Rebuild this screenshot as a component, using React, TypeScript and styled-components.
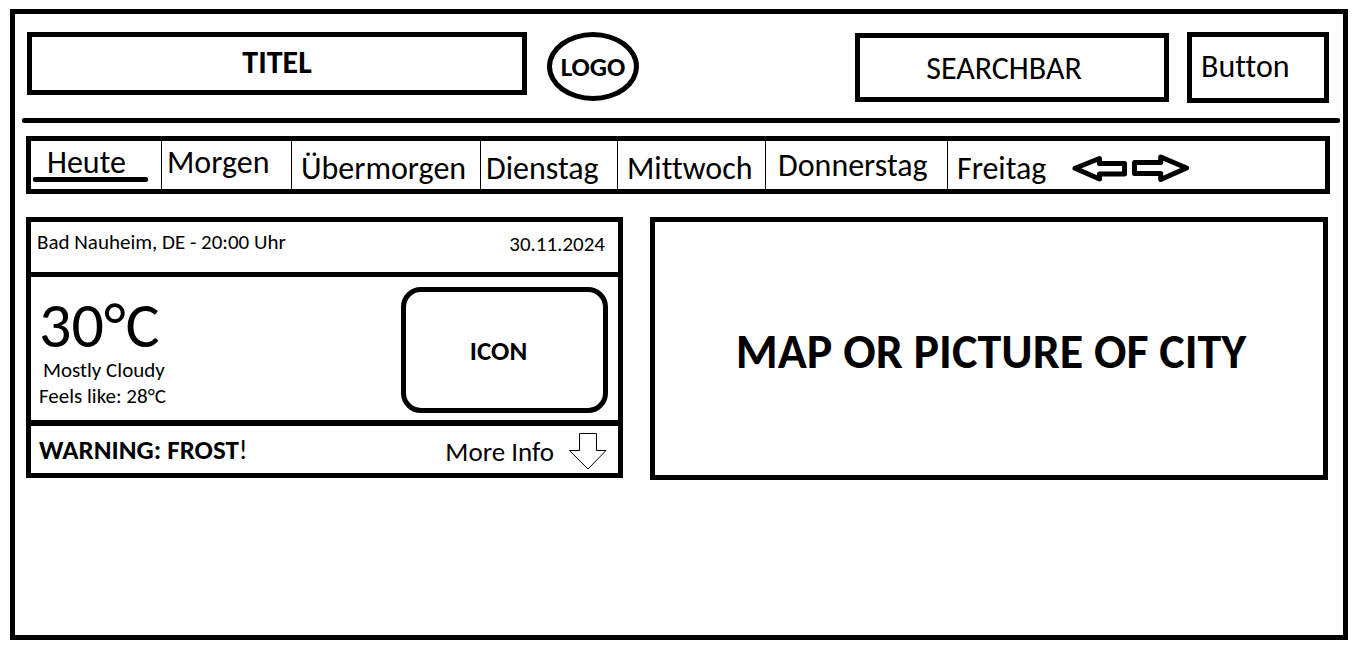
import React, { useState } from "react";
import styled, { createGlobalStyle, css } from "styled-components";

const GlobalStyle = createGlobalStyle`
  *, *::before, *::after { box-sizing: border-box; }
  body {
    margin: 0;
    background: #fff;
    color: #000;
    font-family: Carlito, Lato, "Liberation Sans", sans-serif;
    font-variant-ligatures: none;
  }
  h1, h2, p { margin: 0; font-weight: inherit; font-size: inherit; }
  button, input { font: inherit; font-variant-ligatures: none; color: inherit; border-radius: 0; margin: 0; }
  button { background: none; border: 0; padding: 0; text-align: left; cursor: pointer; }
`;

const line = "5px solid #000";

const Frame = styled.div`
  display: flex;
  flex-direction: column;
  min-height: calc(100vh - 22px);
  margin: 9px 6px 13px 10px;
  padding-top: 18px;
  border: ${line};
`;

const Header = styled.header`
  display: flex;
  align-items: center;
  padding: 0 14px 0 12px;
`;

const Title = styled.h1`
  flex: 0 1 500px;
  align-self: flex-start;
  height: 63px;
  border: ${line};
  text-align: center;
  font-size: 32px;
  font-weight: 700;
  line-height: 52px;
`;

const Logo = styled.div`
  display: flex;
  align-items: center;
  justify-content: center;
  flex: none;
  align-self: flex-start;
  width: 92px;
  height: 69px;
  margin: 0 20px;
  border: ${line};
  border-radius: 50%;
  font-size: 27px;
  font-weight: 700;
`;

const Search = styled.form`
  flex: 0 1 314px;
  min-width: 0;
  margin-left: auto;
`;

const SearchInput = styled.input`
  display: block;
  width: 100%;
  height: 69px;
  padding: 2px 20px 0 4px;
  border: ${line};
  background: #fff;
  text-align: center;
  font-size: 32px;
  &::placeholder { color: #000; opacity: 1; }
`;

const HeaderButton = styled.button`
  flex: none;
  width: 142px;
  height: 71px;
  margin-left: 18px;
  padding: 0 0 2px 9px;
  border: ${line};
  font-size: 32px;
`;

const Divider = styled.hr`
  width: auto;
  height: 5px;
  margin: 15px 3px 0 7px;
  border: 0;
  border-radius: 2px;
  background: #000;
`;

const DayBar = styled.nav`
  display: flex;
  height: 58px;
  margin: 13px 13px 0 11px;
  border: ${line};
  font-size: 32px;
`;

type Level = "high" | "middle" | "low";
const levels: Record<Level, string> = { high: "8px", middle: "11px", low: "14px" };

const DayButton = styled.button<{ $width: number; $inset: number; $level: Level; $active: boolean }>`
  display: flex;
  flex-direction: column;
  flex: 0 0 ${(p) => p.$width}px;
  padding-top: ${(p) => levels[p.$level]};
  line-height: 28px;
  span { padding-left: ${(p) => p.$inset}px; }
  & + & { border-left: 1px solid #000; }
  ${(p) =>
    p.$active &&
    css`
      &::after {
        content: "";
        width: 115px;
        height: 5px;
        margin-left: 2px;
        border-radius: 2px;
        background: #000;
      }
    `}
`;

const Arrows = styled.div`
  display: flex;
  align-items: center;
  gap: 4px;
  margin-left: 24px;
  padding-top: 6px;
`;

const ArrowButton = styled.button`
  svg { display: block; }
`;

const Content = styled.main`
  display: grid;
  grid-template-columns: 597fr 678fr;
  align-items: start;
  gap: 27px;
  margin: 23px 15px 0 11px;
`;

const Card = styled.section`
  border: ${line};
`;

const CardHeader = styled.div`
  display: flex;
  justify-content: space-between;
  align-items: flex-start;
  height: 55px;
  padding: 7px 13px 0 6px;
  border-bottom: ${line};
  font-size: 21px;
  line-height: 26px;
`;

const DateText = styled.time`
  padding-top: 2px;
`;

const CardBody = styled.div`
  display: flex;
  justify-content: space-between;
  align-items: flex-start;
  height: 149px;
  padding: 10px 10px 0 8px;
  border-bottom: 6px solid #000;
`;

const Reading = styled.div`
  padding-top: 6px;
  font-size: 21px;
  line-height: 26px;
`;

const Temperature = styled.h2`
  font-size: 64px;
  line-height: 64px;
`;

const Condition = styled.p`
  padding-left: 4px;
`;

const IconBox = styled.div`
  display: flex;
  align-items: center;
  justify-content: center;
  width: 207px;
  height: 126px;
  padding-right: 12px;
  border: ${line};
  border-radius: 20px;
  font-size: 27px;
  font-weight: 700;
`;

const WarningRow = styled.div`
  display: flex;
  justify-content: space-between;
  align-items: center;
  height: 47px;
  padding: 0 11px 0 8px;
  font-size: 27px;
`;

const MoreInfo = styled.button`
  display: flex;
  align-items: center;
  gap: 15px;
  padding-top: 3px;
`;

const MapBox = styled.section`
  display: flex;
  align-items: center;
  justify-content: center;
  height: 263px;
  padding: 6px 0 0 4px;
  border: ${line};
  font-size: 48px;
  font-weight: 700;
  white-space: nowrap;
`;

const days: { name: string; width: number; inset: number; level: Level }[] = [
  { name: "Heute", width: 130, inset: 16, level: "high" },
  { name: "Morgen", width: 130, inset: 5, level: "high" },
  { name: "Übermorgen", width: 189, inset: 9, level: "low" },
  { name: "Dienstag", width: 137, inset: 5, level: "low" },
  { name: "Mittwoch", width: 148, inset: 9, level: "low" },
  { name: "Donnerstag", width: 182, inset: 12, level: "middle" },
  { name: "Freitag", width: 101, inset: 9, level: "low" },
];

export default function App() {
  const [active, setActive] = useState(0);
  const step = (by: number) =>
    setActive((current) => Math.min(days.length - 1, Math.max(0, current + by)));

  return (
    <>
      <GlobalStyle />
      <Frame>
        <Header>
          <Title>TITEL</Title>
          <Logo>LOGO</Logo>
          <Search role="search" onSubmit={(e) => e.preventDefault()}>
            <SearchInput type="text" aria-label="Search" placeholder="SEARCHBAR" />
          </Search>
          <HeaderButton type="button">Button</HeaderButton>
        </Header>
        <Divider />
        <DayBar>
          {days.map((day, index) => (
            <DayButton
              key={day.name}
              type="button"
              $width={day.width}
              $inset={day.inset}
              $level={day.level}
              $active={index === active}
              onClick={() => setActive(index)}
            >
              <span>{day.name}</span>
            </DayButton>
          ))}
          <Arrows>
            <ArrowButton type="button" aria-label="Previous day" onClick={() => step(-1)}>
              <svg width="56" height="30" viewBox="0 0 56 30" fill="none" stroke="#000" strokeWidth="5" strokeLinejoin="round">
                <path d="M3 15.3 27.5 5.5V10.5H52.5V21H27.5V26Z" />
              </svg>
            </ArrowButton>
            <ArrowButton type="button" aria-label="Next day" onClick={() => step(1)}>
              <svg width="58" height="30" viewBox="0 0 58 30" fill="none" stroke="#000" strokeWidth="5" strokeLinejoin="round">
                <path d="M2.5 9.5H28.7V4L54.5 15 28.7 26.5V20.5H2.5Z" />
              </svg>
            </ArrowButton>
          </Arrows>
        </DayBar>
        <Content>
          <Card>
            <CardHeader>
              <p>Bad Nauheim, DE - 20:00 Uhr</p>
              <DateText dateTime="2024-11-30">30.11.2024</DateText>
            </CardHeader>
            <CardBody>
              <Reading>
                <Temperature>30°C</Temperature>
                <Condition>Mostly Cloudy</Condition>
                <p>Feels like: 28°C</p>
              </Reading>
              <IconBox>ICON</IconBox>
            </CardBody>
            <WarningRow>
              <p>
                <b>WARNING: FROST</b>!
              </p>
              <MoreInfo type="button">
                More Info
                <svg width="38" height="37" viewBox="0 0 38 37" fill="none" stroke="#000" strokeWidth="1">
                  <path d="M10.5 .5H27.5V17.5H37L19 36 .5 17.5H10.5Z" />
                </svg>
              </MoreInfo>
            </WarningRow>
          </Card>
          <MapBox>MAP OR PICTURE OF CITY</MapBox>
        </Content>
      </Frame>
    </>
  );
}
